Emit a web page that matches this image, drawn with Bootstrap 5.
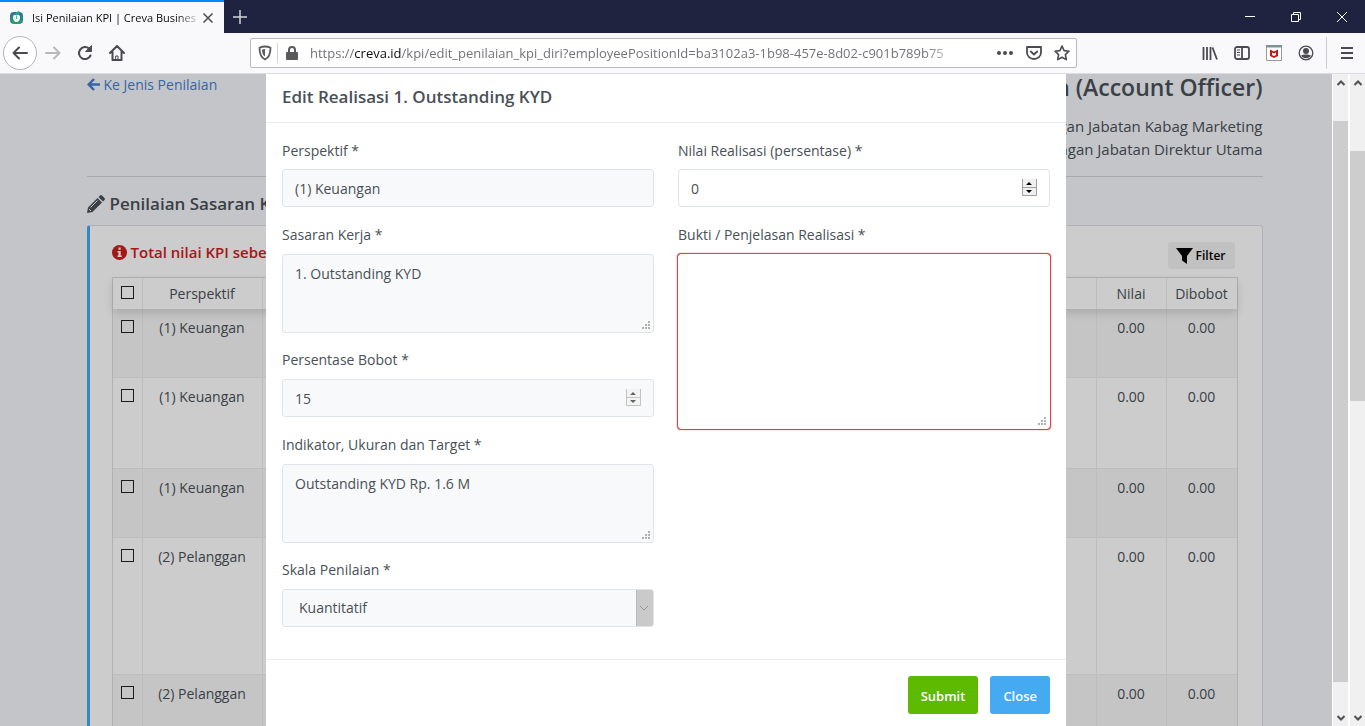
<!DOCTYPE html>
<html lang="id">
<head>
<meta charset="utf-8">
<meta name="viewport" content="width=device-width, initial-scale=1">
<title>Isi Penilaian KPI | Creva Business</title>
<link href="https://cdn.jsdelivr.net/npm/bootstrap@5.3.0/dist/css/bootstrap.min.css" rel="stylesheet">
<style>
  body { font-family: "Open Sans", "Noto Sans", sans-serif; font-size: 14px; line-height: 23px; color: #495057; background: #f5f7fb; }
  svg { display: block; flex: none; }
  .plain-btn { border: 0; background: none; padding: 0; color: #4a4a4f; display: flex; align-items: center; justify-content: center; flex: none; }

  /* browser frame */
  .tab-strip { background: #20233f; height: 33px; }
  .browser-tab { width: 224px; background: #f9f9fb; border-top: 2px solid #0a84ff; padding: 0 9px; color: #0c0c0d; }
  .tab-title { font-size: 11px; white-space: nowrap; color: #0c0c0d; mask-image: linear-gradient(to left, transparent, #000 24px); -webkit-mask-image: linear-gradient(to left, transparent, #000 24px); }
  .window-btn { width: 46px; color: #fff; }
  .toolbar { height: 41px; background: #f9f9fb; border-bottom: 1px solid #dcdce0; padding: 0 2px 0 3px; }
  .nav-btn { width: 32px; height: 32px; }
  .back-btn { width: 34px; height: 34px; border: 1px solid #b5b5b8; border-radius: 50%; background: #fff; }
  .url-bar { height: 30px; border: 1px solid #b9b9bc; border-radius: 2px; background: #fff; margin: 0 117px 0 117px; padding: 0 6px; }
  .url-text { font-size: 13px; color: #737378; white-space: nowrap; overflow: hidden; mask-image: linear-gradient(to left, transparent, #000 40px); -webkit-mask-image: linear-gradient(to left, transparent, #000 40px); }
  .url-text b { font-weight: 400; color: #0c0c0d; }
  .tool-btn { width: 32px; height: 32px; }

  /* scrollbars */
  .scroll-rail { width: 17px; background: #f0f0f0; border: solid #fff; border-width: 0 1px; color: #505050; }
  .scroll-rail.outer-rail { width: 16px; border-width: 0 0 0 1px; }
  .scroll-rail .plain-btn { height: 17px; color: #505050; }
  .scroll-thumb { background: #cdcdcd; }

  /* page */
  .page-wrap { max-width: 1200px; }
  .back-link { color: #467fcf; text-decoration: none; gap: 4px; line-height: 21px; }
  .person { font-size: 23px; line-height: 26px; font-weight: 600; margin-bottom: 15px; }
  .boss { font-weight: 500; font-size: 15px; }
  .rule { border-top: 1px solid #d2d5dc; opacity: 1; margin: 15px 0 14px; }
  .section-title { font-size: 17px; line-height: 26px; font-weight: 600; gap: 5px; }
  .kpi-card { border: 1px solid #dcdfe6; border-left: 3px solid #45aaf2; border-radius: 3px; padding: 16px 24px 0 22px; }
  .warn { color: #cd201f; font-weight: 600; font-size: 15px; line-height: 20px; gap: 4px; white-space: nowrap; }
  .filter-btn { height: 27px; background: #f2f2f2; font-size: 12px; font-weight: 600; color: #000; gap: 3px; border-radius: 3px; margin-right: 3px; padding: 0 9px 0 8px; }
  .kpi-table { --bs-table-bg: #fff; --bs-table-striped-bg: #f7f7f7; --bs-table-color: #495057; --bs-table-striped-color: #495057; table-layout: fixed; border-collapse: separate; border-spacing: 0; border: 1px solid #dcdfe3; margin: 0; text-align: center; }
  .kpi-table th, .kpi-table td { font-weight: 400; padding: 7px 0; border: solid #ededee; border-width: 0 1px 1px 0; vertical-align: top; }
  .kpi-table th { padding: 4px 0; border-bottom: 0; }
  .kpi-table thead { position: relative; z-index: 1; box-shadow: 0 4px 10px rgba(0,0,0,.14); }
  .kpi-table tr > :last-child { border-right: 0; }
  .col-check { width: 30px; } .col-persp { width: 120px; } .col-num { width: 70px; }
  .lines-2 { height: 69px; } .lines-3 { height: 91px; } .lines-5 { height: 137px; }
  .kpi-table input { appearance: none; width: 13px; height: 13px; border: 1px solid #222; margin: 4px auto 0; display: block; }

  /* dialog */
  .overlay { position: absolute; inset: 0; z-index: 2; }
  .dim { background: rgba(0,0,0,.2); }
  .dialog { max-width: 800px; background: #fff; }
  .dialog-head { padding: 10px 16px 12px; border-bottom: 1px solid #e9ecef; }
  .dialog-head h5 { font-size: 17px; line-height: 26px; font-weight: 600; margin: 0; }
  .dialog-body { padding: 16px; }
  .dialog-foot { padding: 16px; border-top: 1px solid #e9ecef; gap: 12px; }
  .field { margin-bottom: 16px; }
  .field label { display: block; line-height: 24px; margin-bottom: 7px; }
  .field:first-child label { line-height: 23px; }
  .field .form-control, .field .form-select { font-size: 14px; line-height: 22px; color: #495057; border: 1px solid #dfe3ea; border-radius: 3px; padding: 7px 12px; height: 38px; background-color: #fff; }
  .field [readonly], .field .form-select { background-color: #f8f9fa; }
  .field textarea.form-control { height: 79px; margin-bottom: -1px; padding-top: 8px; display: block; resize: vertical; }
  .field textarea::-webkit-resizer { background: url("data:image/svg+xml,%3Csvg xmlns='http://www.w3.org/2000/svg' width='15' height='15'%3E%3Cpath fill='%23b0b0b0' d='M10 4h2v2h-2zM7 7h2v2H7zM10 7h2v2h-2zM4 10h2v2H4zM7 10h2v2H7zM10 10h2v2h-2z'/%3E%3C/svg%3E") no-repeat right bottom; }
  .field textarea.evidence { height: 175px; border-color: #fff; box-shadow: 0 0 1px 1px #e0282e; }
  input[type=number]::-webkit-inner-spin-button { -webkit-appearance: none; opacity: 1; width: 15px; height: 17px; background: url("data:image/svg+xml,%3Csvg xmlns='http://www.w3.org/2000/svg' width='15' height='17'%3E%3Cpath fill='%23f0f0f0' d='M0 0h15v17H0z'/%3E%3Cpath fill='none' stroke='%23a0a0a0' d='M.5 0v16.500h14V0M0 8.500h15'/%3E%3Cpath d='M4 6h6L7 3zM4 11h6l-3 3z'/%3E%3C/svg%3E") no-repeat; }
  input[readonly]::-webkit-inner-spin-button { opacity: .6; }
  .field .form-select { padding-left: 16px; background-image: url("data:image/svg+xml,%3Csvg xmlns='http://www.w3.org/2000/svg' width='17' height='36'%3E%3Cpath fill='%23cacaca' d='M0 0h17v36H0z'/%3E%3Cpath fill='none' stroke='%23b9b9b9' d='M.5 0v36'/%3E%3Cpath fill='none' stroke='%23999' d='M4 16l4 4 4-4'/%3E%3C/svg%3E"); background-size: 17px 36px; background-position: right center; }
  .act-btn { height: 38px; padding: 2px 13px 0; border-radius: 3px; color: #fff; font-size: 13px; font-weight: 600; border: 0; }
  .act-submit { background: #5eba00; } .act-close { background: #45aaf2; }
</style>
</head>
<body class="vh-100 d-flex flex-column overflow-hidden">

<header>
  <div class="tab-strip d-flex">
    <div class="browser-tab d-flex align-items-center">
      <svg width="15" height="15" viewBox="0 0 15 15"><defs><linearGradient id="fav" x2="0" y2="1"><stop stop-color="#2d6c9f"/><stop offset="1" stop-color="#2f9d62"/></linearGradient></defs><rect x="1" y="2" width="13" height="12" rx="4" fill="url(#fav)"/><path d="M7.500 5.500C5 3.500 3.500 6 4 8.500c.5 2.500 2 4 3.500 3.500C9 12.500 10.500 11 11 8.500c.5-2.500-1-5-3.500-3z" fill="#e9f6f5"/><path d="M7 5c0-2 1-3 3-4 0 2-1 3-2 4M7.500 6v3" stroke="#3c9" fill="none"/></svg>
      <span class="tab-title flex-grow-1 ms-2">Isi Penilaian KPI | Creva Busines</span>
      <button class="plain-btn" aria-label="Tutup tab"><svg width="14" height="14" viewBox="0 0 14 14" fill="none" stroke="currentColor" stroke-width="1.500"><path d="M2.500 2.500l9 9M11.500 2.500l-9 9"/></svg></button>
    </div>
    <button class="plain-btn px-2" aria-label="Tab baru"><svg width="16" height="16" viewBox="0 0 16 16" stroke="#d5d5dd" stroke-width="1.500"><path d="M8 1v14M1 8h14"/></svg></button>
    <div class="d-flex ms-auto">
      <button class="plain-btn window-btn" aria-label="Minimalkan"><svg width="10" height="10" stroke="currentColor"><path d="M0 4.500h10"/></svg></button>
      <button class="plain-btn window-btn" aria-label="Pulihkan"><svg width="10" height="10" fill="none" stroke="currentColor"><path d="M.5 2.500h7v7h-7zM2.500 2.500v-2h7v7h-2"/></svg></button>
      <button class="plain-btn window-btn" aria-label="Tutup"><svg width="10" height="10" stroke="currentColor"><path d="M0 0l10 10M10 0L0 10"/></svg></button>
    </div>
  </div>
  <div class="toolbar d-flex align-items-center">
    <button class="plain-btn back-btn" aria-label="Kembali"><svg width="16" height="16" fill="none" stroke="currentColor" stroke-width="2" stroke-linecap="round" stroke-linejoin="round"><path d="M15 8H1.500M7 2.500L1.500 8 7 13.500"/></svg></button>
    <button class="plain-btn nav-btn" aria-label="Maju"><svg width="16" height="16" fill="none" stroke="#b8b8bb" stroke-width="2" stroke-linecap="round" stroke-linejoin="round"><path d="M1 8h13.500M9 2.500L14.500 8 9 13.500"/></svg></button>
    <button class="plain-btn nav-btn" aria-label="Muat ulang"><svg width="16" height="16" fill="none" stroke="currentColor" stroke-width="2" stroke-linecap="round"><path d="M13.500 10.500A6 6 0 1 1 12 3.600"/><path d="M14.500 1v5.500H9z" fill="currentColor" stroke-width="1"/></svg></button>
    <button class="plain-btn nav-btn" aria-label="Beranda"><svg width="16" height="16" fill="none" stroke="currentColor" stroke-width="2" stroke-linecap="round" stroke-linejoin="round"><path d="M1 8l7-7 7 7M3.500 7v8h9V7"/><path d="M7 11h2v4H7z" stroke-width="1"/></svg></button>
    <div class="url-bar d-flex align-items-center flex-grow-1 overflow-hidden">
      <svg width="16" height="16" fill="none" stroke="#5a5a5e" stroke-width="1.800"><path d="M8 1.500c2 0 4 .5 5.500 1.200C13.500 9 12 12.500 8 14.500 4 12.500 2.500 9 2.500 2.700 4 2 6 1.500 8 1.500z"/><path d="M8 4v7.500C6 10.500 5 8 5 4.700 6 4.200 7 4 8 4z" fill="#5a5a5e" stroke="none"/></svg>
      <span class="vr ms-1 me-2 my-1"></span>
      <svg width="12" height="14" viewBox="0 0 12 14"><rect y="6" width="12" height="8" rx="1" fill="#5a5a5e"/><path d="M3 7V4a3 3 0 0 1 6 0v3" fill="none" stroke="#5a5a5e" stroke-width="2"/></svg>
      <span class="url-text ms-2 me-4 ps-1 flex-grow-1">https://<b>creva.id</b>/kpi/edit_penilaian_kpi_diri?employeePositionId=ba3102a3-1b98-457e-8d02-c901b789b75</span>
      <button class="plain-btn ms-2" aria-label="Tindakan halaman"><svg width="18" height="16" fill="currentColor"><circle cx="3" cy="8" r="2"/><circle cx="9" cy="8" r="2"/><circle cx="15" cy="8" r="2"/></svg></button>
      <button class="plain-btn mx-2 ps-1" aria-label="Simpan ke Pocket"><svg width="16" height="16" fill="none" stroke="currentColor" stroke-width="1.800" stroke-linecap="round" stroke-linejoin="round"><path d="M1 2h14v5.500a7 6.500 0 0 1-14 0zM4.800 6.500L8 9.500l3.200-3"/></svg></button>
      <button class="plain-btn ps-1" aria-label="Markahi halaman"><svg width="16" height="16" fill="none" stroke="currentColor" stroke-width="1.600" stroke-linejoin="round"><path d="M8 1l2.100 4.600 4.900.6-3.600 3.400.9 5L8 12.200l-4.300 2.400.9-5L1 6.200l4.900-.6z"/></svg></button>
    </div>
    <button class="plain-btn tool-btn" aria-label="Pustaka"><svg width="16" height="16" fill="none" stroke="currentColor" stroke-width="1.800"><path d="M1.500 2v13M5 2v13M8.500 2v13M10.500 2.500l4.500 12"/></svg></button>
    <button class="plain-btn tool-btn" aria-label="Bilah samping"><svg width="16" height="16" fill="none" stroke="currentColor" stroke-width="1.800"><rect x="1" y="2" width="14" height="12" rx="2"/><path d="M8 2v12"/><path d="M3 5h3M3 7.500h3M3 10h3" stroke-width="1"/></svg></button>
    <button class="plain-btn tool-btn" aria-label="McAfee"><svg width="16" height="16"><path d="M.5 1.500h15v14H.5z" fill="#fff" stroke="#999"/><path d="M0 0h16v2.500H0z" fill="#7d9297"/><path d="M4 4.500l4 2 4-2V11l-4 2-4-2z" fill="#c01818"/><path d="M6 7.500l2 1 2-1v2.500l-2 1-2-1z" fill="#fff"/></svg></button>
    <button class="plain-btn tool-btn" aria-label="Akun"><svg width="16" height="16"><circle cx="8" cy="8" r="6.800" fill="none" stroke="currentColor" stroke-width="1.300"/><circle cx="8" cy="6" r="3" fill="currentColor"/><path d="M3 10.500c2-1.500 8-1.500 10 0-2 3.500-8 3.500-10 0z" fill="currentColor"/></svg></button>
    <span class="vr ms-1 my-1"></span>
    <button class="plain-btn tool-btn ms-1" aria-label="Menu"><svg width="12" height="14" stroke="currentColor" stroke-width="2"><path d="M0 2h12M0 7h12M0 12h12"/></svg></button>
  </div>
</header>

<div class="d-flex flex-grow-1 overflow-hidden">
  <div class="flex-grow-1 position-relative overflow-hidden">

    <main class="container-fluid page-wrap">
      <div class="d-flex justify-content-between align-items-start">
        <a class="back-link d-flex align-items-center" href="#"><svg width="13" height="13" fill="none" stroke="currentColor" stroke-width="2.500"><path d="M13 6.500H2M7 1L1.700 6.500 7 12"/></svg>Ke Jenis Penilaian</a>
        <div class="text-end">
          <div class="person">Karyawan (Account Officer)</div>
          <div class="boss">Atasan dengan Jabatan Kabag Marketing</div>
          <div class="boss">Atasan dengan Jabatan Direktur Utama</div>
        </div>
      </div>
      <hr class="rule">
      <h2 class="section-title d-flex align-items-center mb-2"><svg width="18" height="18" viewBox="0 0 18 18" fill="currentColor"><path d="M0 18l1-5.500L10.500 3 15 7.500 5.500 17zM11.500 2l1.500-1.500q1-.8 2 0L17.500 3q.8 1 0 2L16 6.500z"/><path d="M3.500 12.500L10.500 5.500M2 14l2 2" stroke="#f5f7fb"/></svg>Penilaian Sasaran Kerja</h2>
      <section class="kpi-card card">
        <div class="d-flex justify-content-between align-items-start mb-2">
          <div class="warn d-flex align-items-center"><svg width="15" height="15" viewBox="0 0 15 15"><circle cx="7.500" cy="7.500" r="7.500" fill="currentColor"/><path d="M6.500 2.500h2.200v2.200H6.500zM5.500 6h3.200v4.500h1V12H5.500v-1.500h1v-3h-1z" fill="#fff"/></svg>Total nilai KPI sebelum</div>
          <button class="plain-btn filter-btn"><svg width="17" height="16"><path d="M0 0h17l-6 8v8l-5-3.500V8z"/></svg>Filter</button>
        </div>
        <table class="table table-striped kpi-table">
          <colgroup><col class="col-check"><col class="col-persp"><col><col class="col-num"><col class="col-num"></colgroup>
          <thead><tr><th><input type="checkbox" aria-label="Pilih semua"></th><th>Perspektif</th><th></th><th>Nilai</th><th>Dibobot</th></tr></thead>
          <tbody>
            <tr class="lines-2"><td><input type="checkbox" aria-label="Pilih baris 1"></td><td>(1) Keuangan</td><td></td><td>0.00</td><td>0.00</td></tr>
            <tr class="lines-3"><td><input type="checkbox" aria-label="Pilih baris 2"></td><td>(1) Keuangan</td><td></td><td>0.00</td><td>0.00</td></tr>
            <tr class="lines-2"><td><input type="checkbox" aria-label="Pilih baris 3"></td><td>(1) Keuangan</td><td></td><td>0.00</td><td>0.00</td></tr>
            <tr class="lines-5"><td><input type="checkbox" aria-label="Pilih baris 4"></td><td>(2) Pelanggan</td><td></td><td>0.00</td><td>0.00</td></tr>
            <tr class="lines-3"><td><input type="checkbox" aria-label="Pilih baris 5"></td><td>(2) Pelanggan</td><td></td><td>0.00</td><td>0.00</td></tr>
          </tbody>
        </table>
      </section>
    </main>

    <div class="overlay d-flex">
      <div class="dim flex-grow-1 overflow-hidden">
        <form class="dialog mx-auto" role="dialog" aria-labelledby="judul">
          <div class="dialog-head"><h5 id="judul">Edit Realisasi 1. Outstanding KYD</h5></div>
          <div class="dialog-body">
            <div class="row">
              <div class="col-6">
                <div class="field"><label for="perspektif">Perspektif *</label><input id="perspektif" class="form-control" value="(1) Keuangan" readonly></div>
                <div class="field"><label for="sasaran">Sasaran Kerja *</label><textarea id="sasaran" class="form-control" readonly>1. Outstanding KYD</textarea></div>
                <div class="field"><label for="bobot">Persentase Bobot *</label><input id="bobot" type="number" class="form-control" value="15" readonly></div>
                <div class="field"><label for="indikator">Indikator, Ukuran dan Target *</label><textarea id="indikator" class="form-control" readonly>Outstanding KYD Rp. 1.6 M</textarea></div>
                <div class="field"><label for="skala">Skala Penilaian *</label><select id="skala" class="form-select"><option>Kuantitatif</option></select></div>
              </div>
              <div class="col-6">
                <div class="field"><label for="nilai">Nilai Realisasi (persentase) *</label><input id="nilai" type="number" class="form-control" value="0"></div>
                <div class="field"><label for="bukti">Bukti / Penjelasan Realisasi *</label><textarea id="bukti" class="form-control evidence"></textarea></div>
              </div>
            </div>
          </div>
          <div class="dialog-foot d-flex justify-content-end">
            <button type="button" class="act-btn act-submit">Submit</button>
            <button type="button" class="act-btn act-close">Close</button>
          </div>
        </form>
      </div>
      <div class="scroll-rail d-flex flex-column flex-shrink-0">
        <button class="plain-btn" aria-label="Gulir ke atas"><svg width="8" height="6" fill="none" stroke="currentColor" stroke-width="2"><path d="M.5 5L4 1.500 7.500 5"/></svg></button>
        <div style="flex:30"></div><div class="scroll-thumb" style="flex:561"></div><div style="flex:27"></div>
        <button class="plain-btn" aria-label="Gulir ke bawah"><svg width="8" height="6" fill="none" stroke="currentColor" stroke-width="2"><path d="M.5 1L4 4.500 7.500 1"/></svg></button>
      </div>
    </div>
  </div>

  <div class="scroll-rail outer-rail d-flex flex-column flex-shrink-0">
    <button class="plain-btn" aria-label="Gulir halaman ke atas"><svg width="8" height="6" fill="none" stroke="currentColor" stroke-width="2"><path d="M.5 5L4 1.500 7.500 5"/></svg></button>
    <div style="flex:60"></div><div class="scroll-thumb" style="flex:250"></div><div style="flex:308"></div>
    <button class="plain-btn" aria-label="Gulir halaman ke bawah"><svg width="8" height="6" fill="none" stroke="currentColor" stroke-width="2"><path d="M.5 1L4 4.500 7.500 1"/></svg></button>
  </div>
</div>

<script src="https://cdn.jsdelivr.net/npm/bootstrap@5.3.0/dist/js/bootstrap.bundle.min.js"></script>
</body>
</html>
